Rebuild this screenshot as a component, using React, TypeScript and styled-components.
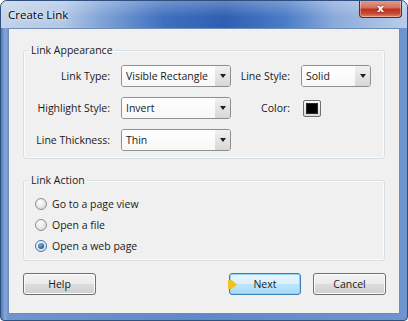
import React from 'react';
import styled, { createGlobalStyle } from 'styled-components';

const Global = createGlobalStyle`
  html, body { margin: 0; padding: 0; background: #ffffff; }
  body { font-family: "Open Sans", "Noto Sans", sans-serif; color: #1a1a1a; }
  * { box-sizing: border-box; }
`;

const Window = styled.div`
  width: 408px;
  height: 321px;
  display: flex;
  flex-direction: column;
  border: 1px solid #2f4f7f;
  border-radius: 7px 7px 4px 4px;
  overflow: hidden;
  background: linear-gradient(to right, #4f79b8 0px, #86a8da 4px, #6f95cf 7px, #5f88c6 50%, #6f95cf 100%);
`;

const TitleBar = styled.div`
  height: 27px;
  flex: none;
  display: flex;
  align-items: flex-start;
  justify-content: space-between;
  padding-left: 7px;
  background:
    linear-gradient(to bottom, rgba(255,255,255,0.25), rgba(255,255,255,0) 60%),
    linear-gradient(to right, #c2d3ea 0%, #b2c8e6 15%, #7fa2d6 25%, #3f70bf 40%, #2e5fb2 55%, #4b7cc6 70%, #8aaadb 82%, #b9cde9 100%);
`;

const Title = styled.span`
  font-size: 11.5px;
  line-height: 27px;
  color: #000;
  text-shadow: 0 0 6px rgba(255,255,255,0.9), 0 0 2px rgba(255,255,255,0.9);
`;

const CloseButton = styled.div`
  width: 43px;
  height: 18px;
  margin-right: 5px;
  margin-top: -1px;
  border: 1px solid #5b2a22;
  border-top: none;
  border-radius: 0 0 4px 4px;
  background: linear-gradient(to bottom, #e6a08f 0%, #d4705b 45%, #b8321d 55%, #c64b33 80%, #e0866d 100%);
  box-shadow: inset 0 0 0 1px rgba(255,255,255,0.35);
  display: flex;
  align-items: center;
  justify-content: center;
  color: #fff;
  font-family: "DejaVu Sans", sans-serif;
  font-weight: bold;
  font-size: 11px;
  text-shadow: 0 0 2px #6b1a10;
`;

const Client = styled.div`
  flex: 1;
  margin: 0 7px 6px 7px;
  border: 1px solid #6f8db8;
  background: #f0f0f0;
  padding: 14px 14px 0 14px;
  display: flex;
  flex-direction: column;
  font-size: 10.5px;
`;

const Group = styled.fieldset<{ $top?: number; $pt?: number; $pb?: number }>`
  margin: ${p => p.$top ?? 0}px 0 0 0;
  padding: ${p => p.$pt ?? 7}px 0 ${p => p.$pb ?? 7}px 5px;
  border: 1px solid #d5dfe5;
  border-radius: 3px;
  box-shadow: inset 0 0 0 1px #fbfbfb;
  min-width: 0;
`;

const Legend = styled.legend`
  padding: 0 2px;
  font-size: 10.5px;
  line-height: 15px;
  color: #1a1a1a;
`;

const FormGrid = styled.div`
  display: grid;
  grid-template-columns: 81px 110px 48px 70px;
  column-gap: 11px;
  row-gap: 10px;
  grid-auto-rows: 22px;
  align-items: center;
  & > :nth-child(3) { margin-left: 1px; }
`;

const Label = styled.span`
  justify-self: end;
  white-space: nowrap;
`;

const Combo = styled.div`
  height: 22px;
  display: flex;
  border: 1px solid #8e8f8f;
  border-radius: 3px;
  background: #fff;
  overflow: hidden;
  box-shadow: inset 0 0 0 1px #ffffff;
`;

const ComboText = styled.span`
  flex: 1;
  padding-left: 4px;
  line-height: 20px;
  white-space: nowrap;
  background: linear-gradient(to bottom, #ffffff, #f7f7f7);
`;

const ComboArrow = styled.span`
  width: 15px;
  display: flex;
  align-items: center;
  justify-content: center;
  background: linear-gradient(to bottom, #f0f0f0 0%, #e4e4e4 50%, #d6d6d6 100%);
  &::after {
    content: '';
    border-left: 3.5px solid transparent;
    border-right: 3.5px solid transparent;
    border-top: 4px solid #1e1e1e;
  }
`;

const Swatch = styled.div`
  width: 18px;
  height: 17px;
  border: 1px solid #707070;
  border-radius: 2px;
  background: linear-gradient(to bottom, #f6f6f6, #dadada);
  padding: 2px;
  margin-left: 2px;
`;

const SwatchFill = styled.div`
  width: 100%;
  height: 100%;
  background: #000;
  border: 1px solid #2a2a2a;
`;

const RadioList = styled.div`
  display: flex;
  flex-direction: column;
  gap: 5px;
  padding-left: 6px;
`;

const RadioRow = styled.label`
  display: flex;
  align-items: center;
  gap: 5px;
  height: 16px;
`;

const RadioDot = styled.span<{ $checked?: boolean }>`
  width: 12px;
  height: 12px;
  border-radius: 50%;
  border: 1px solid ${p => (p.$checked ? '#3d7bad' : '#8f8f8f')};
  background: radial-gradient(circle at 40% 35%, #ffffff 0%, #e6e6e6 55%, #c9c9c9 100%);
  display: flex;
  align-items: center;
  justify-content: center;
  &::after {
    content: '';
    display: ${p => (p.$checked ? 'block' : 'none')};
    width: 6px;
    height: 6px;
    border-radius: 50%;
    background: radial-gradient(circle at 40% 35%, #6fb3e8 0%, #2d6aa5 60%, #173e6e 100%);
  }
`;

const ButtonRow = styled.div`
  display: flex;
  justify-content: space-between;
  margin-top: 12px;
`;

const RightButtons = styled.div`
  display: flex;
  gap: 12px;
  margin-right: -1px;
`;

const Button = styled.div<{ $primary?: boolean }>`
  position: relative;
  width: ${p => (p.$primary ? 72 : 73)}px;
  height: 22px;
  display: flex;
  align-items: center;
  justify-content: center;
  border-radius: 3px;
  border: 1px solid ${p => (p.$primary ? '#3c82b8' : '#707070')};
  background: ${p =>
    p.$primary
      ? 'linear-gradient(to bottom, #eaf6fd 0%, #d9f0fc 50%, #bee6fd 51%, #a7d9f5 100%)'
      : 'linear-gradient(to bottom, #f2f2f2 0%, #ebebeb 50%, #dddddd 51%, #cfcfcf 100%)'};
  box-shadow: inset 0 0 0 1px ${p => (p.$primary ? '#8fd0f4' : '#fbfbfb')};
  font-size: 10.5px;
`;

const Pointer = styled.span`
  position: absolute;
  left: -2px;
  top: 6px;
  width: 9px;
  height: 9px;
  background: #f2c21c;
  clip-path: polygon(0 0, 40% 0, 100% 50%, 40% 100%, 0 100%);
`;

function ComboBox({ value }: { value: string }) {
  return (
    <Combo>
      <ComboText>{value}</ComboText>
      <ComboArrow />
    </Combo>
  );
}

export default function App() {
  return (
    <>
      <Global />
      <Window>
        <TitleBar>
          <Title>Create Link</Title>
          <CloseButton>x</CloseButton>
        </TitleBar>
        <Client>
          <Group>
            <Legend>Link Appearance</Legend>
            <FormGrid>
              <Label>Link Type:</Label>
              <ComboBox value="Visible Rectangle" />
              <Label>Line Style:</Label>
              <ComboBox value="Solid" />
              <Label>Highlight Style:</Label>
              <ComboBox value="Invert" />
              <Label>Color:</Label>
              <Swatch><SwatchFill /></Swatch>
              <Label>Line Thickness:</Label>
              <ComboBox value="Thin" />
            </FormGrid>
          </Group>
          <Group $top={14} $pt={8} $pb={6}>
            <Legend>Link Action</Legend>
            <RadioList>
              <RadioRow><RadioDot />Go to a page view</RadioRow>
              <RadioRow><RadioDot />Open a file</RadioRow>
              <RadioRow><RadioDot $checked />Open a web page</RadioRow>
            </RadioList>
          </Group>
          <ButtonRow>
            <Button>Help</Button>
            <RightButtons>
              <Button $primary><Pointer />Next</Button>
              <Button>Cancel</Button>
            </RightButtons>
          </ButtonRow>
        </Client>
      </Window>
    </>
  );
}
